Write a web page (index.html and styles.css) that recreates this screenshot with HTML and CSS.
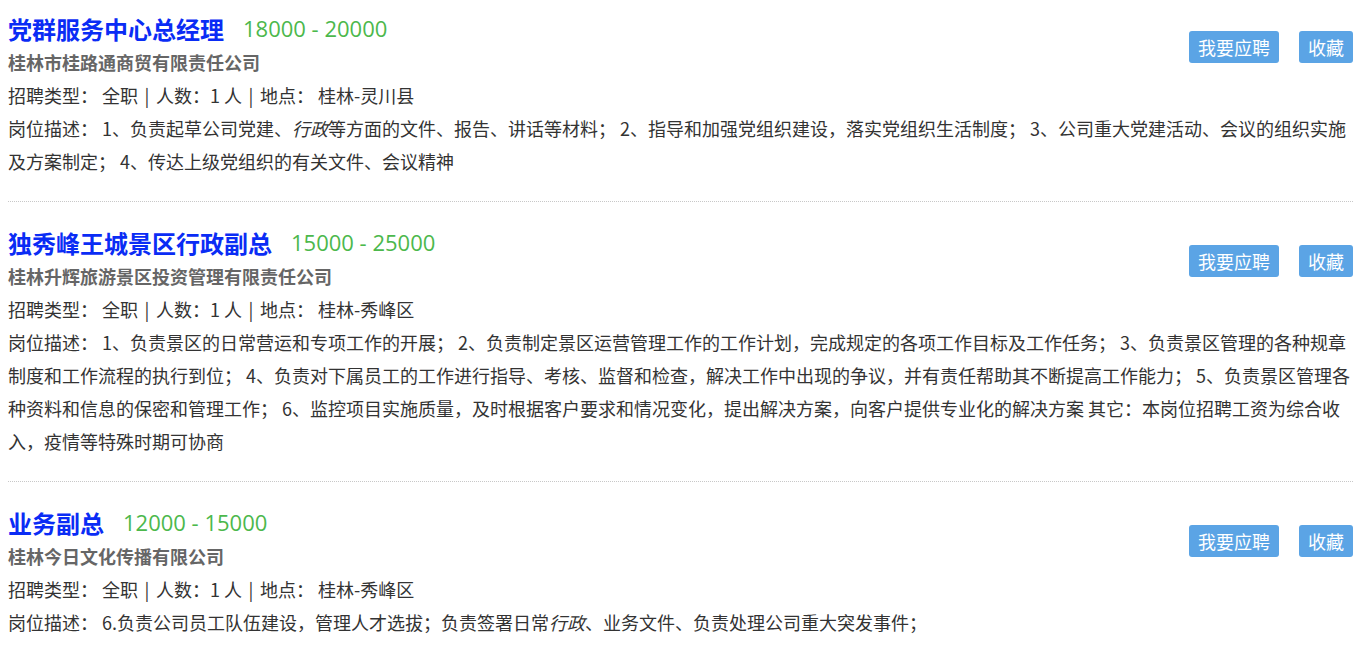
FILE: index.html
```html
<!DOCTYPE html>
<html lang="zh-CN">
<head>
<meta charset="utf-8">
<title>招聘列表</title>
<link rel="stylesheet" href="styles.css">
</head>
<body>
<div class="job-list">
  <div class="job-item">
    <div class="job-head">
      <div class="job-main">
        <div class="job-title-row"><a class="job-title">党群服务中心总经理</a><span class="salary">18000 - 20000</span></div>
        <div class="company">桂林市桂路通商贸有限责任公司</div>
        <div class="info">招聘类型： 全职<span class="sep"> | </span>人数：1 人<span class="sep"> | </span>地点： 桂林-灵川县</div>
      </div>
      <div class="actions"><a class="btn">我要应聘</a><a class="btn">收藏</a></div>
    </div>
    <p class="desc">岗位描述： 1、负责起草公司党建、<i>行政</i>等方面的文件、报告、讲话等材料； 2、指导和加强党组织建设，落实党组织生活制度； 3、公司重大党建活动、会议的组织实施及方案制定； 4、传达上级党组织的有关文件、会议精神</p>
  </div>
  <div class="job-item">
    <div class="job-head">
      <div class="job-main">
        <div class="job-title-row"><a class="job-title">独秀峰王城景区行政副总</a><span class="salary">15000 - 25000</span></div>
        <div class="company">桂林升辉旅游景区投资管理有限责任公司</div>
        <div class="info">招聘类型： 全职<span class="sep"> | </span>人数：1 人<span class="sep"> | </span>地点： 桂林-秀峰区</div>
      </div>
      <div class="actions"><a class="btn">我要应聘</a><a class="btn">收藏</a></div>
    </div>
    <p class="desc">岗位描述： 1、负责景区的日常营运和专项工作的开展； 2、负责制定景区运营管理工作的工作计划，完成规定的各项工作目标及工作任务； 3、负责景区管理的各种规章制度和工作流程的执行到位； 4、负责对下属员工的工作进行指导、考核、监督和检查，解决工作中出现的争议，并有责任帮助其不断提高工作能力； 5、负责景区管理各种资料和信息的保密和管理工作； 6、监控项目实施质量，及时根据客户要求和情况变化，提出解决方案，向客户提供专业化的解决方案 其它：本岗位招聘工资为综合收入，疫情等特殊时期可协商</p>
  </div>
  <div class="job-item">
    <div class="job-head">
      <div class="job-main">
        <div class="job-title-row"><a class="job-title">业务副总</a><span class="salary">12000 - 15000</span></div>
        <div class="company">桂林今日文化传播有限公司</div>
        <div class="info">招聘类型： 全职<span class="sep"> | </span>人数：1 人<span class="sep"> | </span>地点： 桂林-秀峰区</div>
      </div>
      <div class="actions"><a class="btn">我要应聘</a><a class="btn">收藏</a></div>
    </div>
    <p class="desc">岗位描述： 6.负责公司员工队伍建设，管理人才选拔；负责签署日常<i>行政</i>、业务文件、负责处理公司重大突发事件；</p>
  </div>
</div>
</body>
</html>
```
FILE: styles.css
```css
* { box-sizing: border-box; }
html, body { margin: 0; padding: 0; background: #fff; }
body {
  font-family: "Noto Sans CJK SC", "Noto Sans", sans-serif;
  font-size: 18px;
  color: #333;
}
.job-list { padding: 0 3px 0 8px; }
.job-item {
  padding: 23px 0 23px;
  border-bottom: 1px dotted #c8c8c8;
}
.job-item:first-child { padding-top: 11px; }
.job-item:last-child { border-bottom: none; }
.job-head {
  display: flex;
  justify-content: space-between;
  align-items: flex-start;
}
.job-title-row {
  display: flex;
  align-items: center;
  height: 35px;
  white-space: nowrap;
}
.job-title {
  font-size: 24px;
  font-weight: 700;
  color: #0a2cf5;
  line-height: 35px;
}
.salary {
  font-family: "Open Sans", "Noto Sans", sans-serif;
  font-size: 22px;
  color: #4cb84c;
  margin-left: 19px;
  line-height: 35px;
}
.company {
  font-weight: 700;
  color: #666;
  line-height: 33px;
}
.info { line-height: 33px; }
.sep { padding: 0 2.5px; }
.desc {
  margin: 0;
  line-height: 33px;
}
.desc i { font-style: italic; }
.actions {
  display: flex;
  gap: 20px;
  margin-top: 20px;
  flex-shrink: 0;
}
.btn {
  display: block;
  height: 32px;
  line-height: 32px;
  padding: 0 9px;
  font-size: 18px;
  color: #fff;
  background: #5ba4e5;
  border-radius: 3px;
  white-space: nowrap;
}
```
